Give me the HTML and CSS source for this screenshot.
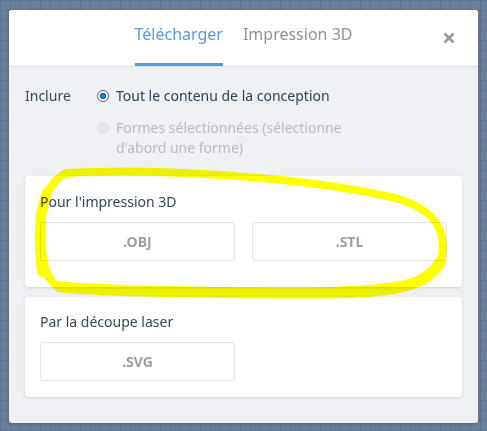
FILE: index.html
```html
<!DOCTYPE html>
<html lang="fr">
<head>
<meta charset="utf-8">
<link rel="stylesheet" href="styles.css">
</head>
<body>
<div class="dialog">
  <div class="header">
    <div class="tabs">
      <div class="tab active">Télécharger</div>
      <div class="tab">Impression 3D</div>
    </div>
    <div class="close">
      <svg width="12" height="12" viewBox="0 0 12 12"><path d="M1.5 1.5 L10.5 10.5 M10.5 1.5 L1.5 10.5" stroke="#9a9a9a" stroke-width="2.6" stroke-linecap="butt"/></svg>
    </div>
  </div>
  <div class="body">
    <div class="include">
      <div class="inc-label">Inclure</div>
      <div class="options">
        <div class="option">
          <span class="radio checked"></span>
          <span class="opt-text">Tout le contenu de la conception</span>
        </div>
        <div class="option disabled">
          <span class="radio"></span>
          <span class="opt-text">Formes sélectionnées (sélectionne<br>d'abord une forme)</span>
        </div>
      </div>
    </div>
    <div class="card card-first">
      <div class="card-title">Pour l'impression 3D</div>
      <div class="btns">
        <div class="btn">.OBJ</div>
        <div class="btn">.STL</div>
      </div>
    </div>
    <div class="card">
      <div class="card-title">Par la découpe laser</div>
      <div class="btns">
        <div class="btn">.SVG</div>
        <div class="spacer"></div>
      </div>
    </div>
  </div>
</div>
<svg class="scribble" width="487" height="431" viewBox="0 0 487 431">
  <path d="M66 173 C150 168, 300 176, 395 198 C438 210, 447 233, 441 260 C434 284, 400 290, 300 292 C200 293, 90 293, 56 285 C41 276, 40 240, 42 214 C44 194, 53 180, 66 173 Z" fill="none" stroke="#ffff00" stroke-width="8" stroke-linejoin="round"/>
  <path d="M60 287 C120 292, 250 293, 330 293 C400 292, 428 284, 440 262" fill="none" stroke="#ffff00" stroke-width="11" stroke-linecap="round"/>
  <path d="M42 272 C38 240, 39 212, 47 192" fill="none" stroke="#ffff00" stroke-width="10" stroke-linecap="round"/>
</svg>
</body>
</html>
```
FILE: styles.css
```css
html, body {
  margin: 0;
  padding: 0;
}
body {
  width: 487px;
  height: 431px;
  overflow: hidden;
  background-color: #6f7f95;
  background-image:
    linear-gradient(to right, rgba(70,110,150,0.55) 1px, transparent 1px),
    linear-gradient(to bottom, rgba(70,110,150,0.55) 1px, transparent 1px);
  background-size: 10px 10px;
  font-family: "Noto Sans", "Open Sans", sans-serif;
  position: relative;
  padding-top: 10px;
  box-sizing: border-box;
}
.dialog {
  margin-left: 9px;
  width: 469px;
  height: 413px;
  background: #eef0f4;
  border-radius: 3px;
  overflow: hidden;
  box-shadow: 0 1px 4px rgba(0,0,0,0.25);
}
.header {
  height: 56px;
  background: #ffffff;
  border-bottom: 1px solid #dde1e6;
  display: flex;
  justify-content: center;
  position: relative;
}
.tabs {
  display: flex;
  gap: 20px;
  height: 100%;
}
.tab {
  font-size: 16px;
  color: #8d939a;
  height: 100%;
  box-sizing: border-box;
  padding-top: 13px;
  line-height: 22px;
  border-bottom: 3px solid transparent;
}
.tab.active {
  color: #5a9be0;
  border-bottom-color: #5a9be0;
}
.close {
  position: absolute;
  right: 23px;
  top: 22px;
  width: 12px;
  height: 12px;
  display: flex;
}
.body {
  padding: 19px 16px 0 16px;
}
.include {
  display: flex;
  font-size: 14px;
  line-height: 20px;
}
.inc-label {
  width: 72px;
  color: #34475c;
}
.options {
  display: flex;
  flex-direction: column;
  gap: 12px;
}
.option {
  display: flex;
  align-items: flex-start;
  color: #2f4157;
}
.option.disabled {
  color: #b7bbc1;
}
.radio {
  width: 12px;
  height: 12px;
  border-radius: 50%;
  box-sizing: border-box;
  margin-top: 4px;
  margin-right: 7px;
  flex: none;
  background: #e4e6ea;
  border: 1px solid #d6d9de;
}
.radio.checked {
  border: 1px solid #5a5f66;
  background: radial-gradient(circle, #1d8fd6 0, #0e6cb0 3px, #ffffff 3.6px);
}
.card {
  background: #ffffff;
  border-radius: 4px;
  box-shadow: 0 1px 3px rgba(0,0,0,0.12);
  padding: 15px 15px 16px 15px;
  margin-top: 10px;
}
.card-first {
  margin-top: 18px;
  padding-top: 16px;
  padding-bottom: 26px;
}
.card-title {
  font-size: 14px;
  line-height: 20px;
  color: #34475c;
}
.btns {
  display: flex;
  gap: 17px;
  margin-top: 10px;
}
.btn, .spacer {
  width: 195px;
  height: 39px;
  box-sizing: border-box;
}
.btn {
  border: 1px solid #dfe2e6;
  border-radius: 3px;
  display: flex;
  align-items: center;
  justify-content: center;
  font-size: 14px;
  font-weight: bold;
  color: #9aa0a8;
}
.scribble {
  position: absolute;
  left: 0;
  top: 0;
  pointer-events: none;
  mix-blend-mode: multiply;
}
```
